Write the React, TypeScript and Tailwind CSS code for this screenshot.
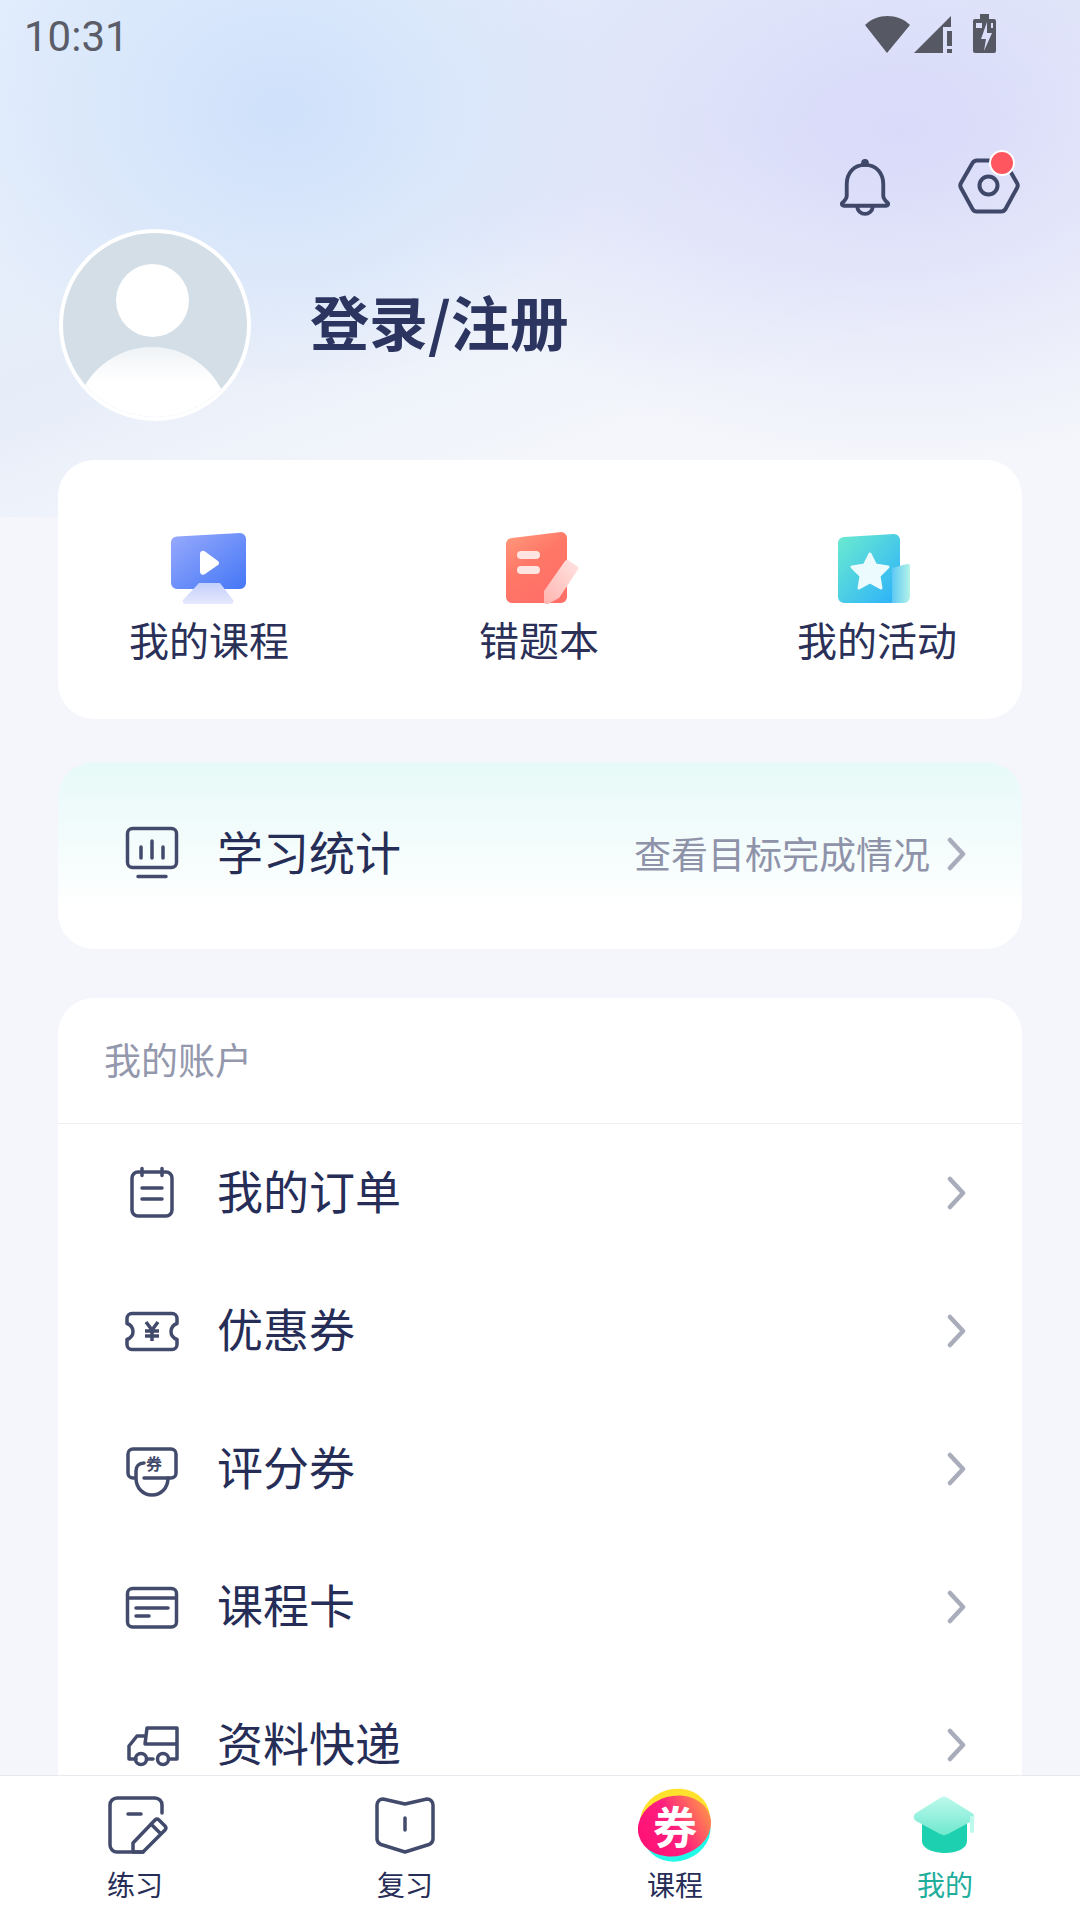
import type { ReactNode } from "react";

const font = "font-['Noto_Sans_CJK_SC','Noto_Sans',sans-serif]";

function Chevron() {
  return (
    <svg width="20" height="34" viewBox="0 0 20 34" fill="none" className="shrink-0">
      <path d="M3 3l13 14L3 31" stroke="#a9adbb" strokeWidth="4.5" strokeLinecap="round" strokeLinejoin="round" />
    </svg>
  );
}

function LineIcon({ children }: { children: ReactNode }) {
  return (
    <svg
      width="56"
      height="56"
      viewBox="0 0 56 56"
      fill="none"
      stroke="#434b6c"
      strokeWidth="3.5"
      strokeLinecap="round"
      strokeLinejoin="round"
      className="shrink-0"
    >
      {children}
    </svg>
  );
}

const rows: { label: string; icon: ReactNode }[] = [
  {
    label: "我的订单",
    icon: (
      <>
        <rect x="8" y="7" width="40" height="44" rx="6" />
        <path d="M18 3.500v7M38 3.500v7M18 23h20M18 34h20" />
      </>
    ),
  },
  {
    label: "优惠券",
    icon: (
      <>
        <path d="M8 10.500h40a5 5 0 0 1 5 5v5c-4 1.500-6 4-6 8s2 6.500 6 8v5a5 5 0 0 1-5 5H8a5 5 0 0 1-5-5v-5c4-1.500 6-4 6-8s-2-6.500-6-8v-5a5 5 0 0 1 5-5z" />
        <path d="M22 19l6 8 6-8M21 28h14M21 33h14M28 27v11" strokeWidth="3.5" strokeLinecap="butt" />
      </>
    ),
  },
  {
    label: "评分券",
    icon: (
      <>
        <path d="M11 37H9a5 5 0 0 1-5-5V13a5 5 0 0 1 5-5h38a5 5 0 0 1 5 5v19a5 5 0 0 1-5 5H20" />
        <path d="M20 22c-5 0-8 3-8 8v7c0 10 7 17 16 17s16-7 16-17" />
        <text x="30" y="29" fontSize="16" fontWeight="700" fill="#434b6c" stroke="none" textAnchor="middle" fontFamily="'Noto Sans CJK SC',sans-serif">
          券
        </text>
      </>
    ),
  },
  {
    label: "课程卡",
    icon: (
      <>
        <rect x="3.500" y="9.500" width="49" height="38.500" rx="5" />
        <path d="M4 19h48M12 29h32M12 37h13" />
      </>
    ),
  },
  {
    label: "资料快递",
    icon: (
      <>
        <path d="M12 42H5V29l8-10h8M21 27l2-16h30v31h-8M29 42h-6M21 27h32" />
        <circle cx="17" cy="42" r="5.500" />
        <circle cx="39" cy="42" r="5.500" />
      </>
    ),
  },
];

function CourseIcon() {
  return (
    <svg width="80" height="72" viewBox="0 0 80 72" className="shrink-0">
      <defs>
        <linearGradient id="mon" x1="0" y1="0" x2="1" y2="1">
          <stop offset="0" stopColor="#98aafc" />
          <stop offset="1" stopColor="#4477f6" />
        </linearGradient>
        <linearGradient id="stand" x1="0" y1="0" x2="0" y2="1">
          <stop offset="0" stopColor="#c3cffc" />
          <stop offset="1" stopColor="#e6e9fd" />
        </linearGradient>
      </defs>
      <path d="M8 4.500L71 1a6 6 0 0 1 6 6v44a6 6 0 0 1-6 6H8a6 6 0 0 1-6-6V10a6 6 0 0 1 6-5.500z" fill="url(#mon)" />
      <path d="M31 22a3 3 0 0 1 5-2.500l13 9.500a2.500 2.500 0 0 1 0 4L36 42a3 3 0 0 1-5-2.500z" fill="#fff" />
      <path d="M30 51h21l13 17a2.500 2.500 0 0 1-2 4H16a2.500 2.500 0 0 1-2-4z" fill="url(#stand)" />
    </svg>
  );
}

function WrongBookIcon() {
  return (
    <svg width="80" height="72" viewBox="0 0 80 72" className="shrink-0">
      <defs>
        <linearGradient id="book" x1="0" y1="0" x2="0.600" y2="1">
          <stop offset="0" stopColor="#ff9a7c" />
          <stop offset="0.500" stopColor="#ff7767" />
          <stop offset="1" stopColor="#ff6f68" />
        </linearGradient>
        <linearGradient id="pen" x1="1" y1="0" x2="0" y2="1">
          <stop offset="0" stopColor="#ffe4e2" />
          <stop offset="1" stopColor="#ffb4af" />
        </linearGradient>
      </defs>
      <path d="M13 6L62 0a6 6 0 0 1 6 6v59a6 6 0 0 1-6 6H13a6 6 0 0 1-6-6V12a6 6 0 0 1 6-6z" fill="url(#book)" />
      <rect x="18" y="19" width="23" height="8" rx="4" fill="#ffe5e1" />
      <rect x="18" y="34" width="23" height="8" rx="4" fill="#ffe5e1" />
      <path d="M66 29a3 3 0 0 1 3-1l9 6a2.500 2.500 0 0 1 1 3.500L60 66l-11 6a3 3 0 0 1-4-2V59z" fill="url(#pen)" />
    </svg>
  );
}

function ActivityIcon() {
  return (
    <svg width="80" height="72" viewBox="0 0 80 72" className="shrink-0">
      <defs>
        <linearGradient id="act" x1="0" y1="0" x2="1" y2="1">
          <stop offset="0" stopColor="#6cebcf" />
          <stop offset="1" stopColor="#2bb0fb" />
        </linearGradient>
        <linearGradient id="side" x1="0" y1="0" x2="1" y2="0">
          <stop offset="0" stopColor="#5cc9f5" />
          <stop offset="1" stopColor="#b5f3e8" />
        </linearGradient>
      </defs>
      <path d="M7 5L57 2a6 6 0 0 1 6 6v57a6 6 0 0 1-6 6H7a6 6 0 0 1-6-6V11a6 6 0 0 1 6-6z" fill="url(#act)" />
      <path d="M33 22l5.500 11 12.500 2-9 9 2 12-11-6-11 6 2-12-9-9 12.500-2z" fill="#ebfbfe" stroke="#ebfbfe" strokeWidth="3" strokeLinejoin="round" />
      <path d="M55 36l15-4a2 2 0 0 1 3 2v31a6 6 0 0 1-6 6H55z" fill="url(#side)" />
    </svg>
  );
}

const shortcuts = [
  { label: "我的课程", icon: <CourseIcon />, cls: "ml-[51px]" },
  { label: "错题本", icon: <WrongBookIcon />, cls: "ml-[130px]" },
  { label: "我的活动", icon: <ActivityIcon />, cls: "ml-[138px]" },
];

function NavItem({ label, icon, active }: { label: string; icon: ReactNode; active?: boolean }) {
  return (
    <div className="flex flex-1 flex-col items-center">
      <div className="flex h-[88px] w-full items-center justify-center pt-[10px]">{icon}</div>
      <span className={`text-[28px] leading-[40px] ${active ? "text-[#20ad9c]" : "text-[#262d57]"}`}>{label}</span>
    </div>
  );
}

export default function App() {
  return (
    <div className={`relative flex h-[1920px] w-[1080px] flex-col overflow-hidden bg-[#f4f6fb] ${font}`}>
      {/* header gradient */}
      <div className="absolute inset-x-0 top-0 h-[517px] bg-[radial-gradient(ellipse_340px_280px_at_280px_110px,#cfe1fb_0%,rgba(207,225,251,0)_100%),radial-gradient(ellipse_500px_330px_at_900px_130px,#d8daf9_0%,rgba(216,218,249,0)_100%),linear-gradient(160deg,#e3eefc_0%,#e6edf9_44%,#eef2fa_57%,#f4f6fb_72%)]" />

      <div className="relative min-h-0 flex-1 overflow-hidden">
        {/* status bar */}
        <div className="flex h-[72px] items-start justify-between pl-[24px] pr-[84px] pt-[14px]">
          <span className="mt-[2px] font-['Roboto',sans-serif] text-[42px] leading-[42px] text-[#5a5c68]">10:31</span>
          <svg width="131" height="40" viewBox="0 0 131 40" fill="#565864">
            <path d="M0 11C12-1 33-1 45 11L22 39z" />
            <path d="M49 39L86 2v11h-8v26z" />
            <rect x="82" y="17" width="5" height="15" />
            <rect x="82" y="35" width="5" height="4" />
            <path d="M115 0h9v5h5a2 2 0 0 1 2 2v30a2 2 0 0 1-2 2h-19a2 2 0 0 1-2-2V7a2 2 0 0 1 2-2h5z" />
            <path d="M111 9h6v5h-6zM126 9h2v5h-2zM122 8l-6 17h5l-2 12 8-18h-5z" fill="#dcdffa" />
          </svg>
        </div>

        {/* top actions */}
        <div className="mt-[86px] flex h-[56px] items-start justify-end pr-[60px]">
          <svg width="50" height="58" viewBox="0 0 52 58" fill="none" stroke="#3f4868" strokeWidth="4" strokeLinecap="round" strokeLinejoin="round">
            <path d="M26 6C14 6 7 15 7 26v12c0 3-2 5-4 7-2 1.500-1 3.500 1 3.500h44c2 0 3-2 1-3.500-2-2-4-4-4-7V26C45 15 38 6 26 6z" />
            <path d="M18 49c0 5 4 8 8 8s8-3 8-8" />
            <circle cx="26" cy="4" r="2" fill="#3f4868" />
          </svg>
          <div className="relative ml-[68px]">
            <svg width="62" height="56" viewBox="0 0 62 56" fill="none" stroke="#3f4868" strokeWidth="4" strokeLinejoin="round">
              <path d="M19 2.500h24a5 5 0 0 1 4.500 2.500L59 25a5 5 0 0 1 0 5L47.500 51a5 5 0 0 1-4.500 2.500H19a5 5 0 0 1-4.500-2.500L3 30a5 5 0 0 1 0-5L14.500 5a5 5 0 0 1 4.500-2.500z" />
              <circle cx="30.500" cy="27.500" r="9" />
            </svg>
            <span className="absolute left-[31px] top-[-8px] h-[26px] w-[26px] rounded-full border-2 border-white bg-[#ff5660]" />
          </div>
        </div>

        {/* profile */}
        <div className="mt-[15px] flex h-[231px] items-start pl-[59px]">
          <div className="relative h-[192px] w-[192px] overflow-hidden rounded-full border-[4px] border-white bg-[#d3dee7]">
            <div className="absolute left-[53px] top-[31px] h-[73px] w-[73px] rounded-full bg-white" />
            <div className="absolute left-[11px] top-[114px] h-[156px] w-[156px] rounded-full bg-gradient-to-b from-[#eff3f6] via-white via-[22%] to-white" />
          </div>
          <h1 className="ml-[59px] mt-[52px] text-[59px] font-bold leading-[80px] text-[#2c3560]">登录/注册</h1>
        </div>

        <div className="mx-[58px]">
          {/* shortcuts */}
          <div className="flex h-[259px] rounded-[36px] bg-white pt-[72px]">
            {shortcuts.map((s) => (
              <div key={s.label} className={`flex w-[200px] flex-col items-center ${s.cls}`}>
                {s.icon}
                <span className="mt-[7px] text-[40px] leading-[56px] text-[#2a3058]">{s.label}</span>
              </div>
            ))}
          </div>

          {/* study stats */}
          <div className="mt-[43px] flex h-[187px] items-center rounded-[36px] bg-[linear-gradient(180deg,#e7faf8_0%,#f4fcfc_45%,#ffffff_78%)] pb-[3px] pl-[66px] pr-[55px]">
            <svg width="56" height="56" viewBox="0 0 56 56" fill="none" stroke="#434b6c" strokeWidth="3.500" strokeLinecap="round" className="shrink-0">
              <rect x="3.500" y="2.500" width="49" height="39" rx="5" />
              <path d="M17 21v11M28 15v17M39 21v11M14 50.500h28" />
            </svg>
            <span className="mb-[8px] ml-[37px] flex-1 text-[46px] leading-[60px] text-[#262d57]">学习统计</span>
            <span className="mb-[3px] mr-[17px] text-[37px] leading-[50px] text-[#8f93a9]">查看目标完成情况</span>
            <Chevron />
          </div>

          {/* account */}
          <div className="mt-[49px] rounded-t-[36px] bg-white">
            <div className="flex h-[126px] items-center border-b border-[#eeeff2] pb-[2px] pl-[46px] text-[37px] text-[#9498ad]">我的账户</div>
            {rows.map((r) => (
              <div key={r.label} className="flex h-[138px] items-center pl-[66px] pr-[55px]">
                <LineIcon>{r.icon}</LineIcon>
                <span className="mb-[9px] ml-[37px] flex-1 text-[46px] leading-[60px] text-[#262d57]">{r.label}</span>
                <Chevron />
              </div>
            ))}
          </div>
        </div>
      </div>

      {/* bottom nav */}
      <div className="relative flex h-[145px] shrink-0 border-t border-[#e8e9ee] bg-white">
        <NavItem
          label="练习"
          icon={
            <svg width="60" height="58" viewBox="0 0 60 58" fill="none" stroke="#434b6c" strokeWidth="3.500" strokeLinecap="round" strokeLinejoin="round" className="ml-[5px]">
              <path d="M54 17V9a7 7 0 0 0-7-7H9a7 7 0 0 0-7 7v40a7 7 0 0 0 7 7h26" />
              <path d="M20 18h13M25 56v-9L47 24a3 3 0 0 1 4 0l6 6a3 3 0 0 1 0 4L35 56zM43 28l10 10" />
            </svg>
          }
        />
        <NavItem
          label="复习"
          icon={
            <svg width="60" height="58" viewBox="0 0 60 58" fill="none" stroke="#434b6c" strokeWidth="3.500" strokeLinecap="round" strokeLinejoin="round">
              <path d="M8 3l22 5 22-5a6 6 0 0 1 6 6v34a6 6 0 0 1-4 5.500L30 56 6 48.500A6 6 0 0 1 2 43V9a6 6 0 0 1 6-6z" />
              <path d="M30 22v12" />
            </svg>
          }
        />
        <NavItem
          label="课程"
          icon={
            <div className="relative h-[74px] w-[74px]">
              <svg width="74" height="74" viewBox="0 0 74 74" className="absolute inset-0">
                <defs>
                  <linearGradient id="quan" x1="0" y1="0.600" x2="1" y2="0.400">
                    <stop offset="0" stopColor="#ff1074" />
                    <stop offset="0.500" stopColor="#ff1f7e" />
                    <stop offset="1" stopColor="#ff8f4c" />
                  </linearGradient>
                </defs>
                <ellipse cx="37" cy="31" rx="35" ry="30" transform="rotate(-15 37 31)" fill="#ffe12e" />
                <ellipse cx="39" cy="44" rx="34" ry="29" transform="rotate(-20 39 44)" fill="#23fbe9" />
                <ellipse cx="36.500" cy="38" rx="37" ry="30" transform="rotate(-15 36.500 38)" fill="url(#quan)" />
              </svg>
              <span className="absolute inset-0 flex items-center justify-center text-[44px] font-bold leading-none text-white">券</span>
            </div>
          }
        />
        <NavItem
          label="我的"
          active
          icon={
            <svg width="62" height="58" viewBox="0 0 62 58" className="ml-[-2px]">
              <defs>
                <linearGradient id="cap" x1="0.500" y1="0" x2="0.500" y2="1">
                  <stop offset="0" stopColor="#bdf9ec" />
                  <stop offset="1" stopColor="#6fe8cf" />
                </linearGradient>
              </defs>
              <path d="M9 25h45v20c0 8-11 12-22 12S9 53 9 45z" fill="#1dd0b0" />
              <path d="M27 2a8 8 0 0 1 8 0l24 15c3 2 3 6 0 8L35 38a8 8 0 0 1-8 0L3 25c-3-2-3-6 0-8z" fill="url(#cap)" />
              <path d="M57 20h4v15a2 2 0 0 1-4 0z" fill="#bdf9ec" />
            </svg>
          }
        />
      </div>
    </div>
  );
}
